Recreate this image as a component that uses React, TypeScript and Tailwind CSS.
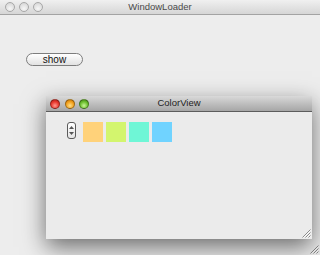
import React from "react";

function Grip({ className }: { className?: string }) {
  return (
    <svg className={className} width="10" height="10" viewBox="0 0 10 10">
      <path d="M9.5 1.5 L1.5 9.5 M9.5 4.5 L4.5 9.5 M9.5 7.5 L7.5 9.5" stroke="#8a8a8a" strokeWidth="1" />
      <path d="M9.5 2.5 L2.5 9.5 M9.5 5.5 L5.5 9.5 M9.5 8.5 L8.5 9.5" stroke="#fafafa" strokeWidth="1" />
    </svg>
  );
}

function Light({ c, b }: { c: string; b: string }) {
  return (
    <div
      className="w-[10px] h-[10px] rounded-full border"
      style={{ background: c, borderColor: b }}
    />
  );
}

export default function App() {
  const gray = "radial-gradient(circle at 50% 70%, #f6f6f6 0%, #e2e2e2 55%, #cfcfcf 100%)";
  return (
    <div className="relative w-[320px] h-[255px] overflow-hidden bg-[#ededed]" style={{ fontFamily: '"Liberation Sans", Arial, sans-serif' }}>
      {/* outer title bar */}
      <div className="relative h-[15px] bg-gradient-to-b from-[#f0f0f0] to-[#d6d6d6] border-b border-[#a3a3a3] flex items-center">
        <div className="flex gap-[4px] pl-[5px]">
          <Light c={gray} b="#a8a8a8" />
          <Light c={gray} b="#a8a8a8" />
          <Light c={gray} b="#a8a8a8" />
        </div>
        <div className="absolute inset-0 flex items-center justify-center text-[9.5px] text-[#4a4a4a]">WindowLoader</div>
      </div>
      {/* body */}
      <div className="pt-[38px] pl-[26px]">
        <button className="w-[57px] h-[13px] rounded-full border border-[#7d7d7d] bg-gradient-to-b from-[#ffffff] to-[#e2e2e2] flex items-center justify-center text-[10px] leading-none text-[#111]">
          show
        </button>
      </div>
      <Grip className="absolute right-[1px] bottom-[1px]" />

      {/* inner window */}
      <div className="absolute left-[46px] top-[96px] w-[266px] h-[143px] bg-[#ebebeb] flex flex-col shadow-[0_8px_22px_rgba(0,0,0,0.55)]">
        <div className="relative h-[16px] shrink-0 bg-gradient-to-b from-[#d9d9d9] to-[#a6a6a6] border-b border-[#5c5c5c] flex items-center">
          <div className="flex gap-[4.5px] pl-[4px]">
            <Light c="radial-gradient(circle at 50% 70%, #ff9a8f 0%, #e8382e 55%, #a51c14 100%)" b="rgba(0,0,0,0.35)" />
            <Light c="radial-gradient(circle at 50% 70%, #ffe08a 0%, #f3a11d 55%, #b96b05 100%)" b="rgba(0,0,0,0.35)" />
            <Light c="radial-gradient(circle at 50% 70%, #c9f59a 0%, #6cbf2e 55%, #3f7e14 100%)" b="rgba(0,0,0,0.35)" />
          </div>
          <div className="absolute inset-0 flex items-center justify-center text-[9.5px] text-[#1e1e1e]">ColorView</div>
        </div>
        <div className="flex items-start pt-[10px] pl-[21px]">
          <div className="w-[9px] h-[17px] rounded-[3px] border border-[#5a5a5a] bg-gradient-to-b from-[#ffffff] to-[#e4e4e4] flex flex-col items-center justify-center gap-[3px] mr-[7px]">
            <svg width="5" height="3" viewBox="0 0 5 3"><path d="M2.5 0 L5 3 L0 3 Z" fill="#555" /></svg>
            <svg width="5" height="3" viewBox="0 0 5 3"><path d="M0 0 L5 0 L2.5 3 Z" fill="#555" /></svg>
          </div>
          <div className="flex gap-[3px]">
            <div className="w-[20px] h-[20px] bg-[#ffd27a]" />
            <div className="w-[20px] h-[20px] bg-[#d3f56e]" />
            <div className="w-[20px] h-[20px] bg-[#6ff6d6]" />
            <div className="w-[20px] h-[20px] bg-[#70d3ff]" />
          </div>
        </div>
        <Grip className="absolute right-[1px] bottom-[1px]" />
      </div>
    </div>
  );
}
